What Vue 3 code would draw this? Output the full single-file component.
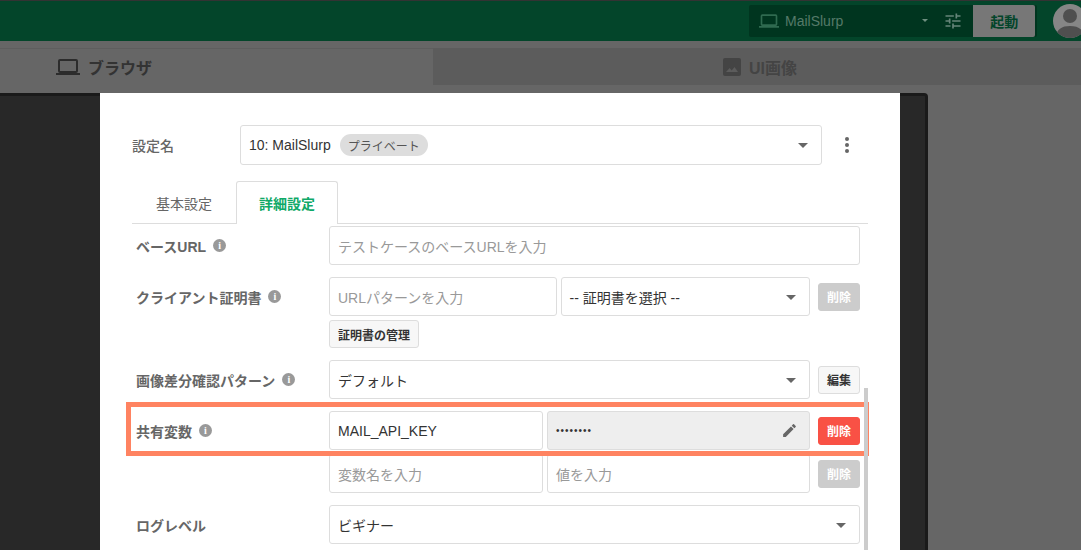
<script setup>
const certPlaceholder = "URLパターンを入力"
const pencil = "M3 17.25V21h3.75L17.81 9.94l-3.75-3.75L3 17.25zM20.71 7.04a1 1 0 0 0 0-1.41l-2.34-2.34a1 1 0 0 0-1.41 0l-1.83 1.83 3.75 3.75 1.83-1.83z"
</script>

<template>
  <div class="page">
    <header class="topbar">
      <div class="runner">
        <svg class="laptop" viewBox="0 0 24 24"><path d="M20 18a2 2 0 0 0 2-2V6a2 2 0 0 0-2-2H4a2 2 0 0 0-2 2v10a2 2 0 0 0 2 2H0v2h24v-2h-4zM4 6h16v10H4V6z" /></svg>
        <span class="runner_name">MailSlurp</span>
        <i class="runner_caret"></i>
        <svg class="tune" viewBox="0 0 24 24"><path d="M3 17v2h6v-2H3zM3 5v2h10V5H3zm10 16v-2h8v-2h-8v-2h-2v6h2zM7 9v2H3v2h4v2h2V9H7zm14 4v-2H11v2h10zm-6-4h2V7h4V5h-4V3h-2v6z" /></svg>
        <button class="start" type="button">起動</button>
      </div>
      <div class="avatar">
        <svg viewBox="0 0 34 34"><circle cx="17" cy="12" r="7" /><path d="M3 34c0-9 6-12 14-12s14 3 14 12z" /></svg>
      </div>
    </header>

    <nav class="main_tabs">
      <div class="main_tab">
        <svg class="tab_icon" viewBox="0 0 24 24"><path d="M20 18a2 2 0 0 0 2-2V6a2 2 0 0 0-2-2H4a2 2 0 0 0-2 2v10a2 2 0 0 0 2 2H0v2h24v-2h-4zM4 6h16v10H4V6z" /></svg>
        ブラウザ
      </div>
      <div class="main_tab other">
        <svg class="tab_icon small" viewBox="0 0 18 18"><path d="M2 0h14a2 2 0 0 1 2 2v14a2 2 0 0 1-2 2H2a2 2 0 0 1-2-2V2a2 2 0 0 1 2-2zm1 14h12l-3.5-5-2.8 3.4-2-2.4z" fill-rule="evenodd" /></svg>
        UI画像
      </div>
    </nav>

    <main class="stage">
      <div class="panel">
        <section class="modal">
          <div class="config_row">
            <span class="config_label">設定名</span>
            <div class="field select config_select">
              <span>10: MailSlurp</span>
              <span class="chip">プライベート</span>
              <i class="arrow"></i>
            </div>
            <div class="dots"><i></i><i></i><i></i></div>
          </div>

          <div class="tabs">
            <div class="tab">基本設定</div>
            <div class="tab active">詳細設定</div>
          </div>

          <div class="settings">
            <div class="row">
              <div class="label">ベースURL<i class="info">i</i></div>
              <div class="body">
                <div class="field placeholder">テストケースのベースURLを入力</div>
              </div>
            </div>

            <div class="row">
              <div class="label">クライアント証明書<i class="info">i</i></div>
              <div class="body">
                <div class="line">
                  <div class="field placeholder half">{{ certPlaceholder }}</div>
                  <div class="field select half">-- 証明書を選択 --<i class="arrow"></i></div>
                  <button class="btn disabled" type="button">削除</button>
                </div>
                <button class="btn manage" type="button">証明書の管理</button>
              </div>
            </div>

            <div class="row">
              <div class="label">画像差分確認パターン<i class="info">i</i></div>
              <div class="body">
                <div class="line">
                  <div class="field select grow">デフォルト<i class="arrow"></i></div>
                  <button class="btn" type="button">編集</button>
                </div>
              </div>
            </div>

            <div class="row">
              <div class="label">共有変数<i class="info">i</i></div>
              <div class="body">
                <div class="line">
                  <div class="field var_name">MAIL_API_KEY</div>
                  <div class="field var_value secret">
                    <span class="mask">••••••••</span>
                    <svg class="pencil" viewBox="0 0 24 24"><path :d="pencil" /></svg>
                  </div>
                  <button class="btn danger" type="button">削除</button>
                </div>
                <div class="line">
                  <div class="field var_name placeholder">変数名を入力</div>
                  <div class="field var_value placeholder">値を入力</div>
                  <button class="btn disabled" type="button">削除</button>
                </div>
              </div>
              <div class="highlight"></div>
            </div>

            <div class="row">
              <div class="label">ログレベル</div>
              <div class="body">
                <div class="field select">ビギナー<i class="arrow"></i></div>
              </div>
            </div>

            <div class="scrollbar"></div>
          </div>
        </section>
      </div>
    </main>
  </div>
</template>

<style>
html, body {
  margin: 0;
  background: #666;
}
</style>

<style scoped>
* {
  box-sizing: border-box;
}

.page {
  width: 1081px;
  height: 550px;
  overflow: hidden;
  display: flex;
  flex-direction: column;
  background: #666;
  font-family: "Liberation Sans", "Noto Sans CJK JP", sans-serif;
  font-size: 14px;
  color: #333;
}

.topbar {
  height: 41px;
  flex: none;
  display: flex;
  align-items: center;
  justify-content: flex-end;
  background: #03452a;
  border-top: 1px solid #333;
  padding-right: 0;
}

.runner {
  width: 288px;
  height: 32px;
  margin-top: -1px;
  display: flex;
  align-items: center;
  background: #00351f;
  border-radius: 2px;
  padding-left: 10px;
}

.laptop {
  width: 20px;
  height: 20px;
  fill: #2f6a50;
}

.runner_name {
  margin-left: 6px;
  color: #557a69;
  font-size: 14px;
}

.runner_caret {
  margin-left: 79px;
  border: 3px solid transparent;
  border-top: 3px solid #6f8f80;
  border-bottom: 0;
}

.tune {
  width: 20px;
  height: 20px;
  margin-left: 15px;
  fill: #66857a;
}

.start {
  width: 62px;
  height: 32px;
  margin-left: 10px;
  border: 0;
  border-radius: 0 2px 2px 0;
  background: #777;
  color: #03452a;
  font: bold 14px "Noto Sans CJK JP", sans-serif;
}

.avatar {
  width: 34px;
  height: 34px;
  margin-left: 16px;
  margin-right: -6px;
  border-radius: 50%;
  background: #868686;
  overflow: hidden;
  flex: none;
}

.avatar svg {
  display: block;
  fill: #4f4f4f;
}

.main_tabs {
  height: 52px;
  flex: none;
  display: flex;
  padding-top: 7px;
  background: #666;
}

.main_tab {
  height: 37px;
  display: flex;
  align-items: center;
  width: 433px;
  padding-left: 56px;
  font-size: 16px;
  font-weight: bold;
  color: #333;
  border-top: 1px solid #5e5e5e;
}

.main_tab.other {
  flex: 1;
  padding-left: 290px;
  background: #5c5c5c;
  color: #444;
  border-top: 0;
}

.tab_icon {
  width: 24px;
  height: 24px;
  margin-right: 8px;
  fill: #2c2c2c;
}

.tab_icon.small {
  width: 18px;
  height: 18px;
  fill: #444;
}

.stage {
  flex: 1;
  min-height: 0;
  background: #666;
}

.panel {
  width: 928px;
  height: 100%;
  padding-left: 100px;
  background: #282828;
  border-top: 3px solid #1a1a1a;
  border-right: 3px solid #1a1a1a;
  border-top-right-radius: 4px;
}

.modal {
  width: 800px;
  height: 100%;
  margin-top: -3px;
  background: #fff;
  padding: 32px 32px 0;
  position: relative;
  height: 460px;
}

.config_row {
  display: flex;
  align-items: center;
}

.config_label {
  width: 108px;
  color: #666;
  font-weight: 500;
  font-family: "Noto Sans CJK JP", sans-serif;
}

.field {
  height: 39px;
  display: flex;
  align-items: center;
  padding: 0 8px;
  border: 1px solid #ddd;
  border-radius: 3px;
  background: #fff;
  color: #333;
  font-size: 14px;
  white-space: nowrap;
}

.select {
  position: relative;
  padding-right: 30px;
}

.arrow {
  position: absolute;
  right: 13px;
  top: 17px;
  border: 5px solid transparent;
  border-top: 5px solid #666;
  border-bottom: 0;
}

.config_select {
  width: 582px;
  height: 40px;
}

.chip {
  height: 22px;
  margin-left: 9px;
  padding: 0 8px;
  display: flex;
  align-items: center;
  border-radius: 11px;
  background: #ddd;
  color: #555;
  font-size: 12px;
}

.dots {
  margin-left: 23px;
  width: 5px;
  display: flex;
  flex-direction: column;
  gap: 2px;
}

.dots i {
  width: 4px;
  height: 4px;
  border-radius: 50%;
  background: #666;
}

.tabs {
  height: 43px;
  margin-top: 16px;
  display: flex;
  border-bottom: 1px solid #ddd;
}

.tab {
  width: 104px;
  height: 43px;
  display: flex;
  align-items: center;
  justify-content: center;
  color: #666;
  font-size: 14px;
}

.tab.active {
  width: 102px;
  background: #fff;
  color: #0fa968;
  font-weight: bold;
  border: 1px solid #ddd;
  border-bottom: 0;
  border-radius: 3px 3px 0 0;
}

.settings {
  position: relative;
  padding: 2px 8px 0 4px;
  height: 330px;
  display: flex;
  flex-direction: column;
  gap: 12px;
}

.row {
  position: relative;
  display: flex;
}

.label {
  width: 193px;
  height: 39px;
  flex: none;
  display: flex;
  align-items: center;
  color: #666;
  font-weight: bold;
  font-size: 14px;
}

.info {
  width: 13px;
  height: 13px;
  margin-left: 7px;
  border-radius: 50%;
  background: #999;
  color: #fff;
  font: bold 10px/13px "Liberation Serif", serif;
  text-align: center;
}

.body {
  flex: 1;
  min-width: 0;
  display: flex;
  flex-direction: column;
  align-items: stretch;
  gap: 4px;
}

.line {
  display: flex;
  align-items: center;
  gap: 4px;
}

.placeholder {
  color: #999;
}

.half {
  flex: 1;
  min-width: 0;
}

.grow {
  flex: 1;
}

.var_name {
  width: 214px;
  flex: none;
}

.var_value {
  flex: 1;
  min-width: 0;
  position: relative;
}

.secret {
  background: #eee;
}

.mask {
  font-size: 10px;
  letter-spacing: 1px;
  color: #333;
}

.pencil {
  position: absolute;
  right: 11px;
  top: 10px;
  width: 17px;
  height: 17px;
  fill: #666;
}

.btn {
  height: 28px;
  width: 42px;
  padding: 0;
  flex: none;
  border: 1px solid #ddd;
  border-radius: 3px;
  background: #f7f7f7;
  color: #333;
  font: bold 12px "Noto Sans CJK JP", sans-serif;
}

.line .btn {
  margin-left: 4px;
}

.btn.disabled {
  background: #ccc;
  border-color: #ccc;
  color: #fff;
}

.btn.danger {
  background: #f95145;
  border-color: #f95145;
  color: #fff;
}

.btn.manage {
  width: 90px;
  align-self: flex-start;
}

.highlight {
  position: absolute;
  left: -10px;
  right: -9px;
  top: -9px;
  height: 54px;
  border: 5px solid #ff8361;
  pointer-events: none;
}

.scrollbar {
  position: absolute;
  right: 0;
  top: 164px;
  width: 4px;
  height: 170px;
  background: #ccc;
}
</style>
